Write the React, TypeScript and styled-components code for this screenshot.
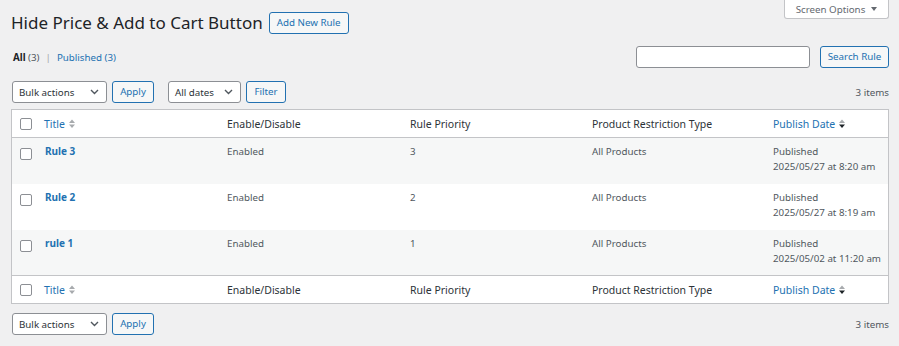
import React from 'react';
import styled, { createGlobalStyle } from 'styled-components';

const GlobalStyle = createGlobalStyle`
  html, body {
    margin: 0;
    padding: 0;
    background: #f0f0f1;
  }
  body {
    font-family: "Noto Sans", "Open Sans", sans-serif;
    color: #3c434a;
  }
  * {
    box-sizing: border-box;
  }
`;

type Rule = {
  id: number;
  title: string;
  status: string;
  priority: number;
  restriction: string;
  date: string;
};

const rules: Rule[] = [
  { id: 3, title: 'Rule 3', status: 'Enabled', priority: 3, restriction: 'All Products', date: '2025/05/27 at 8:20 am' },
  { id: 2, title: 'Rule 2', status: 'Enabled', priority: 2, restriction: 'All Products', date: '2025/05/27 at 8:19 am' },
  { id: 1, title: 'rule 1', status: 'Enabled', priority: 1, restriction: 'All Products', date: '2025/05/02 at 11:20 am' },
];

const Wrap = styled.div`
  width: 899px;
  height: 346px;
  padding: 0 10px 0 11px;
  overflow: hidden;
`;

const ScreenOptions = styled.button`
  float: right;
  width: 105px;
  height: 19px;
  display: flex;
  align-items: center;
  justify-content: center;
  gap: 6px;
  padding: 0;
  background: #fff;
  border: 1px solid #c3c4c7;
  border-top: none;
  border-radius: 0 0 3px 3px;
  font-family: inherit;
  font-size: 9.75px;
  color: #646970;
`;

const Caret = styled.span`
  width: 0;
  height: 0;
  border-left: 3px solid transparent;
  border-right: 3px solid transparent;
  border-top: 4px solid #646970;
`;

const TitleRow = styled.div`
  display: flex;
  align-items: center;
  gap: 6px;
  padding-top: 12px;
  height: 34px;
`;

const PageTitle = styled.h1`
  margin: 0;
  font-size: 17px;
  font-weight: 400;
  line-height: 22px;
  color: #1d2327;
`;

const Button = styled.button<{ $width: number }>`
  width: ${p => p.$width}px;
  height: 22px;
  padding: 0;
  background: #f6f7f7;
  border: 1px solid #2271b1;
  border-radius: 3px;
  color: #2271b1;
  font-family: inherit;
  font-size: 9.75px;
  line-height: 20px;
  cursor: pointer;
`;

const SubRow = styled.div`
  display: flex;
  align-items: center;
  justify-content: space-between;
  margin-top: 12px;
  height: 22px;
`;

const SubSub = styled.div`
  padding-left: 2px;
  font-size: 9.75px;
  color: #50575e;
  display: flex;
  gap: 4px;
`;

const SubLink = styled.span<{ $current?: boolean }>`
  color: ${p => (p.$current ? '#1d2327' : '#2271b1')};
  font-weight: ${p => (p.$current ? 700 : 400)};
`;

const Count = styled.span`
  color: #50575e;
  font-weight: 400;
`;

const Sep = styled.span`
  color: #a7aaad;
  margin: 0 2px;
`;

const SearchBox = styled.div`
  display: flex;
  align-items: center;
  gap: 10px;
`;

const SearchInput = styled.input`
  width: 174px;
  height: 22px;
  border: 1px solid #8c8f94;
  border-radius: 3px;
  background: #fff;
`;

const TableNav = styled.div<{ $top: number }>`
  display: flex;
  align-items: center;
  margin-top: ${p => p.$top}px;
  height: 22px;
`;

const Actions = styled.div`
  display: flex;
  align-items: center;
  gap: 5px;
  margin-right: 14px;
  &:first-child {
    margin-left: 1px;
  }
`;

const SelectBox = styled.div<{ $width: number }>`
  width: ${p => p.$width}px;
  height: 22px;
  display: flex;
  align-items: center;
  justify-content: space-between;
  padding: 0 7px 0 6px;
  background: #fff;
  border: 1px solid #8c8f94;
  border-radius: 3px;
  font-size: 9.75px;
  color: #2c3338;
`;

const Items = styled.div`
  margin-left: auto;
  font-size: 9.75px;
  color: #50575e;
`;

const Table = styled.table`
  width: 100%;
  margin-top: 6px;
  border: 1px solid #c3c4c7;
  border-spacing: 0;
  table-layout: fixed;
  background: #fff;
`;

const HeadCell = styled.th<{ $width?: number; $foot?: boolean }>`
  ${p => (p.$width ? `width: ${p.$width}px;` : '')}
  height: 28px;
  padding: 0 8px;
  text-align: left;
  font-weight: 400;
  font-size: 10.5px;
  color: #2c3338;
  ${p => (p.$foot ? 'border-top: 1px solid #c3c4c7;' : 'border-bottom: 1px solid #c3c4c7;')}
`;

const CheckCell = styled.td<{ $head?: boolean; $foot?: boolean }>`
  width: 24px;
  padding: ${p => (p.$head ? '0' : '10px')} 0 0 8px;
  vertical-align: ${p => (p.$head ? 'middle' : 'top')};
  ${p => (p.$head && !p.$foot ? 'border-bottom: 1px solid #c3c4c7;' : '')}
  ${p => (p.$foot ? 'border-top: 1px solid #c3c4c7;' : '')}
`;

const Check = styled.span`
  display: block;
  width: 12px;
  height: 12px;
  border: 1px solid #8c8f94;
  border-radius: 2px;
  background: #fff;
`;

const SortLink = styled.span`
  display: inline-flex;
  align-items: center;
  gap: 4px;
  color: #2271b1;
`;

const Row = styled.tr<{ $alt: boolean; $height: number }>`
  height: ${p => p.$height}px;
  background: ${p => (p.$alt ? '#f6f7f7' : '#fff')};
`;

const Cell = styled.td`
  padding: 6px 8px 0;
  vertical-align: top;
  font-size: 9.75px;
  line-height: 15px;
  color: #50575e;
  white-space: nowrap;
`;

const RowTitle = styled.strong`
  color: #2271b1;
  font-weight: 700;
  font-size: 10px;
  padding-left: 1px;
`;

const Chevron = () => (
  <svg width="9" height="6" viewBox="0 0 9 6">
    <path d="M1 1l3.5 3.5L8 1" fill="none" stroke="#50575e" strokeWidth="1.4" />
  </svg>
);

const SortIcon = ({ active }: { active?: boolean }) => (
  <svg width="6" height="10" viewBox="0 0 6 10">
    <path d="M0 4L3 0.5L6 4Z" fill="#a7aaad" />
    <path d="M0 5.5L3 9L6 5.5Z" fill={active ? '#1d2327' : '#a7aaad'} />
  </svg>
);

const HeaderRow = ({ foot }: { foot?: boolean }) => (
  <tr>
    <CheckCell as="td" $head $foot={foot}>
      <Check />
    </CheckCell>
    <HeadCell $width={183} $foot={foot}>
      <SortLink>Title <SortIcon /></SortLink>
    </HeadCell>
    <HeadCell $width={183} $foot={foot}>Enable/Disable</HeadCell>
    <HeadCell $width={182} $foot={foot}>Rule Priority</HeadCell>
    <HeadCell $width={181} $foot={foot}>Product Restriction Type</HeadCell>
    <HeadCell $foot={foot}>
      <SortLink>Publish Date <SortIcon active /></SortLink>
    </HeadCell>
  </tr>
);

const BulkActions = () => (
  <Actions>
    <SelectBox $width={95}>
      Bulk actions <Chevron />
    </SelectBox>
    <Button $width={42}>Apply</Button>
  </Actions>
);

export default function App() {
  return (
    <Wrap>
      <GlobalStyle />
      <ScreenOptions>
        Screen Options <Caret />
      </ScreenOptions>
      <TitleRow>
        <PageTitle>Hide Price &amp; Add to Cart Button</PageTitle>
        <Button $width={80}>Add New Rule</Button>
      </TitleRow>
      <SubRow>
        <SubSub>
          <SubLink $current>
            All <Count>(3)</Count>
          </SubLink>
          <Sep>|</Sep>
          <SubLink>Published (3)</SubLink>
        </SubSub>
        <SearchBox>
          <SearchInput />
          <Button $width={69}>Search Rule</Button>
        </SearchBox>
      </SubRow>
      <TableNav $top={13}>
        <BulkActions />
        <Actions>
          <SelectBox $width={73}>
            All dates <Chevron />
          </SelectBox>
          <Button $width={40}>Filter</Button>
        </Actions>
        <Items>3 items</Items>
      </TableNav>
      <Table>
        <thead>
          <HeaderRow />
        </thead>
        <tbody>
          {rules.map((r, i) => (
            <Row key={r.id} $alt={i % 2 === 0} $height={i === 2 ? 45 : 46}>
              <CheckCell>
                <Check />
              </CheckCell>
              <Cell>
                <RowTitle>{r.title}</RowTitle>
              </Cell>
              <Cell>{r.status}</Cell>
              <Cell>{r.priority}</Cell>
              <Cell>{r.restriction}</Cell>
              <Cell>
                Published
                <br />
                {r.date}
              </Cell>
            </Row>
          ))}
        </tbody>
        <tfoot>
          <HeaderRow foot />
        </tfoot>
      </Table>
      <TableNav $top={9}>
        <BulkActions />
        <Items>3 items</Items>
      </TableNav>
    </Wrap>
  );
}
